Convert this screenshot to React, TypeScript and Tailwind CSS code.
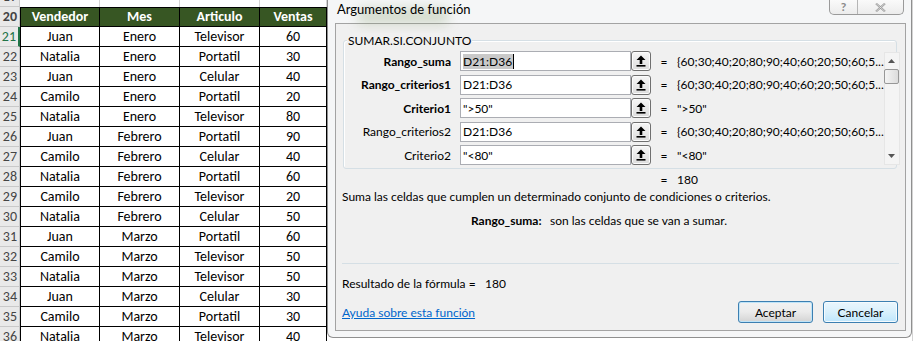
import React from 'react';

const rows = [
  ['21', 'Juan', 'Enero', 'Televisor', '60'],
  ['22', 'Natalia', 'Enero', 'Portatil', '30'],
  ['23', 'Juan', 'Enero', 'Celular', '40'],
  ['24', 'Camilo', 'Enero', 'Portatil', '20'],
  ['25', 'Natalia', 'Enero', 'Televisor', '80'],
  ['26', 'Juan', 'Febrero', 'Portatil', '90'],
  ['27', 'Camilo', 'Febrero', 'Celular', '40'],
  ['28', 'Natalia', 'Febrero', 'Portatil', '60'],
  ['29', 'Camilo', 'Febrero', 'Televisor', '20'],
  ['30', 'Natalia', 'Febrero', 'Celular', '50'],
  ['31', 'Juan', 'Marzo', 'Portatil', '60'],
  ['32', 'Camilo', 'Marzo', 'Televisor', '50'],
  ['33', 'Natalia', 'Marzo', 'Televisor', '50'],
  ['34', 'Juan', 'Marzo', 'Celular', '30'],
  ['35', 'Camilo', 'Marzo', 'Portatil', '30'],
  ['36', 'Natalia', 'Marzo', 'Televisor', '40'],
];

const args = [
  { label: 'Rango_suma', bold: true, input: 'D21:D36', value: '{60;30;40;20;80;90;40;60;20;50;60;5...', selected: true },
  { label: 'Rango_criterios1', bold: true, input: 'D21:D36', value: '{60;30;40;20;80;90;40;60;20;50;60;5...' },
  { label: 'Criterio1', bold: true, input: '">50"', value: '">50"' },
  { label: 'Rango_criterios2', bold: false, input: 'D21:D36', value: '{60;30;40;20;80;90;40;60;20;50;60;5...' },
  { label: 'Criterio2', bold: false, input: '"<80"', value: '"<80"' },
];

const sheetFont = { fontFamily: 'Carlito, Lato, "Liberation Sans", sans-serif' };
const uiFont = { fontFamily: '"Segoe UI", Lato, "Liberation Sans", sans-serif' };

function RowHeader({ n, active }: { n: string; active?: boolean }) {
  return (
    <div
      className={`w-[20px] shrink-0 bg-[#e9e9e9] border-b border-[#c9c9c9] text-right text-[14px] leading-[19px] overflow-hidden whitespace-nowrap pr-[2px] ${
        active ? 'text-[#217346] border-r-2 border-r-[#217346]' : 'text-[#444] border-r'
      }`}
    >
      {n}
    </div>
  );
}

function Sheet() {
  return (
    <div className="w-[327px] h-[341px] shrink-0 overflow-hidden bg-white" style={sheetFont}>
      <div className="-mt-[13px]">
        {/* row 19, mostly scrolled off */}
        <div className="flex h-[20px]">
          <RowHeader n="19" />
          <div className="w-[80px] border-r border-[#d4d4d4]" />
          <div className="w-[80px] border-r border-[#d4d4d4]" />
          <div className="w-[80px] border-r border-[#d4d4d4]" />
          <div className="w-[67px] border-r border-[#d4d4d4]" />
        </div>
        {/* header */}
        <div className="flex h-[20px] text-[14px] font-bold text-white">
          <RowHeader n="20" />
          <div className="w-[80px] bg-[#375623] border border-black text-center leading-[18px]">Vendedor</div>
          <div className="w-[80px] bg-[#375623] border-y border-r border-black text-center leading-[18px]">Mes</div>
          <div className="w-[80px] bg-[#375623] border-y border-r border-black text-center leading-[18px]">Articulo</div>
          <div className="w-[67px] bg-[#375623] border-y border-r border-black text-center leading-[18px]">Ventas</div>
        </div>
        {rows.map((r) => (
          <div key={r[0]} className="flex h-[20px] text-[14px] text-black">
            <RowHeader n={r[0]} active={r[0] === '21'} />
            <div className="w-[80px] border-x border-b border-black text-center leading-[19px]">{r[1]}</div>
            <div className="w-[80px] border-r border-b border-black text-center leading-[19px]">{r[2]}</div>
            <div className="w-[80px] border-r border-b border-black text-center leading-[19px]">{r[3]}</div>
            <div className="w-[67px] border-r border-b border-black text-center leading-[19px]">{r[4]}</div>
          </div>
        ))}
      </div>
    </div>
  );
}

function RefButton() {
  return (
    <div className="w-[20px] h-[20px] shrink-0 rounded-[3px] border border-[#707070] bg-gradient-to-b from-[#f6f6f6] to-[#dddddd] shadow-[inset_0_0_0_1px_#fcfcfc] flex items-center justify-center">
      <svg width="10" height="12" viewBox="0 0 10 12">
        <path d="M5 0.5 L9.5 5 H6.3 V9 H3.7 V5 H0.5 Z" fill="#000" />
        <rect x="0.5" y="10" width="9" height="1.6" fill="#000" />
      </svg>
    </div>
  );
}

function ScrollBar() {
  return (
    <div className="w-[16px] h-[113px] mt-[11px] bg-[#f4f4f4] border border-[#e6e6e6] flex flex-col items-center">
      <div className="h-[16px] flex items-center justify-center">
        <svg width="7" height="4" viewBox="0 0 7 4">
          <path d="M0 4 L3.5 0 L7 4 Z" fill="#555" />
        </svg>
      </div>
      <div className="w-[15px] h-[15px] rounded-[2px] border border-[#979797] bg-gradient-to-r from-[#f4f4f4] to-[#dcdcdc]" />
      <div className="flex-1" />
      <div className="h-[16px] flex items-center justify-center">
        <svg width="7" height="4" viewBox="0 0 7 4">
          <path d="M0 0 L7 0 L3.5 4 Z" fill="#555" />
        </svg>
      </div>
    </div>
  );
}

function Dialog() {
  return (
    <div className="w-[585px] h-[338px] shrink-0 flex flex-col bg-[#f5f6f7] border-x border-b border-[#8f8f8f] rounded-b-[6px] relative overflow-hidden text-[12px] text-black" style={uiFont}>
      {/* aero glass tint behind the title */}
      <div className="absolute left-[30px] top-[8px] w-[90px] h-[16px] bg-[#6f8a4f]/25 blur-[6px]" />
      {/* title bar */}
      <div className="h-[23px] shrink-0 flex items-start justify-between pl-[9px] pr-[7px] relative">
        <span className="pt-[2px] leading-[15px] text-[13px]">Argumentos de función</span>
        <div className="flex h-[15px] border-x border-b border-[#9a9a9a] rounded-b-[5px] bg-gradient-to-b from-[#fafafa] to-[#ececec]">
          <div className="w-[28px] border-r border-[#b5b5b5] flex items-center justify-center text-[12px] leading-[12px] text-[#8a8a8a] font-bold">?</div>
          <div className="w-[45px] flex items-center justify-center">
            <svg width="11" height="9" viewBox="0 0 11 9">
              <path d="M1 0.5 L10 8.5 M10 0.5 L1 8.5" stroke="#9a9a9a" strokeWidth="2" />
              <path d="M1 0.5 L10 8.5 M10 0.5 L1 8.5" stroke="#f5f5f5" strokeWidth="0.6" />
            </svg>
          </div>
        </div>
      </div>
      {/* client area */}
      <div className="ml-[7px] w-[571px] h-[308px] shrink-0 border border-[#a3a3a3] bg-[#f0f0f0] flex flex-col">
        {/* group box */}
        <div className="relative ml-[7px] mt-[16px] w-[554px] h-[129px] border border-[#d5dfe5] rounded-[3px] shadow-[inset_1px_1px_0_#fff] flex">
          <span className="absolute left-[3px] -top-[8px] px-[1px] bg-[#f0f0f0] leading-[15px]">SUMAR.SI.CONJUNTO</span>
          <div className="flex-1 pt-[8.5px] flex flex-col">
            {args.map((a) => (
              <div key={a.label} className="h-[23.5px] flex items-center">
                <div className={`w-[107px] text-right leading-[15px] ${a.bold ? 'font-bold' : ''}`}>{a.label}</div>
                <div className="ml-[9px] w-[171px] h-[20px] bg-white border border-[#abadb3] flex items-center pl-[2px] leading-[15px]">
                  {a.selected ? (
                    <span className="bg-[#c9c9c9] border-r border-black pr-[1px]">{a.input}</span>
                  ) : (
                    <span>{a.input}</span>
                  )}
                </div>
                <RefButton />
                <div className="w-[26px] text-center leading-[15px]">=</div>
                <div className="leading-[15px] whitespace-nowrap">{a.value}</div>
              </div>
            ))}
          </div>
          <div className="mr-[7px]">
            <ScrollBar />
          </div>
        </div>
        <div className="mt-[3px] pl-[315px] flex leading-[15px]">
          <div className="w-[26px] text-center">=</div>
          <div>180</div>
        </div>
        <div className="mt-[2px] pl-[6px] leading-[15px]">
          Suma las celdas que cumplen un determinado conjunto de condiciones o criterios.
        </div>
        <div className="mt-[9px] pl-[135px] flex leading-[15px]">
          <div className="w-[79px] font-bold">Rango_suma:</div>
          <div>son las celdas que se van a sumar.</div>
        </div>
        <div className="mt-[35px] mx-[6px] h-px bg-[#d5dfe5]" />
        <div className="mt-[12px] pl-[6px] flex leading-[15px]">
          <div className="w-[143px]">Resultado de la fórmula =</div>
          <div>180</div>
        </div>
        <div className="mt-[10px] pl-[6px] pr-[7px] flex items-center justify-between">
          <a className="text-[#0066cc] underline leading-[15px]">Ayuda sobre esta función</a>
          <div className="flex gap-[10px]">
            <button className="w-[75px] h-[22px] rounded-[3px] border border-[#3c7fb1] bg-gradient-to-b from-[#f2f2f2] via-[#ebebeb] to-[#d3d3d3] shadow-[inset_0_0_0_1px_#bfe4f8] leading-[15px]">
              Aceptar
            </button>
            <button className="w-[75px] h-[22px] rounded-[3px] border border-[#3c7fb1] bg-gradient-to-b from-[#eaf6fd] via-[#d9f0fc] to-[#bee6fd] shadow-[inset_0_0_0_1px_#f5fbfe] leading-[15px]">
              Cancelar
            </button>
          </div>
        </div>
      </div>
    </div>
  );
}

export default function App() {
  return (
    <div className="w-[915px] h-[341px] overflow-hidden flex bg-white">
      <Sheet />
      <Dialog />
      <div className="flex-1 bg-white border-l border-[#d4d4d4]" />
    </div>
  );
}
